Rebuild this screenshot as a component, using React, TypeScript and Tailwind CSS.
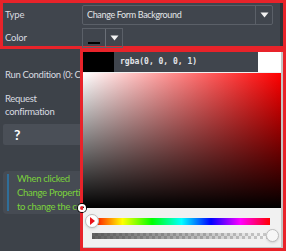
import React from 'react'

const font = { fontFamily: 'Lato, "Open Sans", sans-serif' }

function Caret() {
  return (
    <svg width="9" height="6" viewBox="0 0 9 6">
      <path d="M0.5 0.5 L8.5 0.5 L4.5 5.5 Z" fill="#f2f2f2" />
    </svg>
  )
}

function PropertiesBox() {
  return (
    <div className="relative h-[49px] border-[3px] border-[#e8232a] bg-[#40454d]">
      <div className="absolute right-0 top-0 h-full w-[3px] bg-[#2f3338]" />
      <div className="flex h-[22px] items-center pt-[2px]">
        <span className="w-[79px] pl-[2px] text-[9.5px] tracking-[-0.2px] text-[#d9dbe0]">Type</span>
        <div className="flex h-[20px] w-[191px] items-center rounded-[2px] border border-[#5b6068]">
          <span className="flex-1 pl-[4px] text-[9px] tracking-[-0.35px] text-[#e3e5e8]">Change Form Background</span>
          <div className="flex h-full w-[17px] items-center justify-center border-l border-[#5b6068]">
            <Caret />
          </div>
        </div>
      </div>
      <div className="mt-[3px] flex items-start">
        <span className="w-[79px] pl-[2px] pt-[3px] text-[9.5px] tracking-[-0.2px] text-[#d9dbe0]">Color</span>
        <div className="flex h-[20px] w-[41px] items-stretch border border-[#5b6068]">
          <div className="flex w-[23px] items-end justify-center border-r border-[#6a6f77] pb-[3px]">
            <div className="h-[2px] w-[12px] bg-black" />
          </div>
          <div className="flex flex-1 items-center justify-center">
            <Caret />
          </div>
        </div>
      </div>
    </div>
  )
}

function LeftContent() {
  return (
    <div className="text-[9.5px] tracking-[-0.3px] text-[#d9dbe0]">
      <div className="mt-[19px] whitespace-nowrap pl-[5px]">Run Condition (0: Continue, 1: Stop)</div>
      <div className="mt-[10px] pl-[5px] leading-[13px]">
        <div>Request</div>
        <div>confirmation</div>
      </div>
      <div className="mx-[3px] mt-[6px] flex h-[21px] items-center rounded-[2px] bg-[#4a4f57] pl-[11px]">
        <span className="text-[14px] font-bold text-white">?</span>
      </div>
      <div className="ml-[3px] mt-[26px] flex h-[43px] rounded-[4px] bg-[#464b53] py-[3px] pl-[4px]">
        <div className="w-[2px] bg-[#2f6e99]" />
        <div className="flex flex-col justify-center gap-[2px] whitespace-nowrap pl-[8px] leading-[12px] text-[#7bd23c]">
          <span>When clicked</span>
          <span>Change Properties</span>
          <span>to change the color</span>
        </div>
      </div>
    </div>
  )
}

function ColorPopup() {
  return (
    <div className="absolute left-[80px] top-[49px] flex h-[202px] w-[206px] flex-col border-[3px] border-[#e8232a] bg-[#f1f1f1]">
      <div className="flex flex-1 flex-col border-r-2 border-b border-[#c4c4c4]">
        <div className="flex h-[20px]">
          <div className="w-[31px] bg-black" />
          <div
            className="flex flex-1 items-center bg-[#40454d] pl-[6px] text-[8px] font-bold text-[#e4e6ea]"
            style={{ fontFamily: '"DejaVu Sans Mono", monospace' }}
          >
            rgba(0, 0, 0, 1)
          </div>
          <div className="w-[23px] bg-white" />
        </div>
        <div className="relative mt-px h-[135px] bg-[linear-gradient(to_top,#000,rgba(0,0,0,0)),linear-gradient(to_right,#fff,#f00)]">
          <div className="absolute -bottom-[4px] -left-[5px] h-[8px] w-[8px] rounded-full border-2 border-white shadow-[0_0_0_1px_#000]" />
        </div>
        <div className="relative flex-1">
          <div className="absolute left-[10px] top-[10px] h-[7px] w-[177px] bg-[linear-gradient(to_right,#f00,#ff0,#0f0,#0ff,#00f,#f0f,#f00)]" />
          <div className="absolute left-[2px] top-[6px] flex h-[14px] w-[14px] items-center justify-center rounded-full border border-[#bdbdbd] bg-white shadow">
            <svg width="6" height="8" viewBox="0 0 6 8">
              <path d="M1 0 L6 4 L1 8 Z" fill="#e8121a" />
            </svg>
          </div>
          <div className="absolute left-[9px] top-[25px] h-[6px] w-[184px] bg-[linear-gradient(to_right,rgba(70,70,70,0.85),rgba(255,255,255,0)),repeating-conic-gradient(#cfcfcf_0_25%,#ffffff_0_50%)] bg-[length:100%_100%,6px_6px]" />
          <div className="absolute left-[183px] top-[21px] h-[13px] w-[13px] rounded-full border border-[#bdbdbd] bg-[#f7f7f7] shadow" />
        </div>
      </div>
    </div>
  )
}

export default function App() {
  return (
    <div className="relative h-[251px] w-[286px] overflow-hidden bg-[#3d4249]" style={font}>
      <PropertiesBox />
      <LeftContent />
      <ColorPopup />
    </div>
  )
}
